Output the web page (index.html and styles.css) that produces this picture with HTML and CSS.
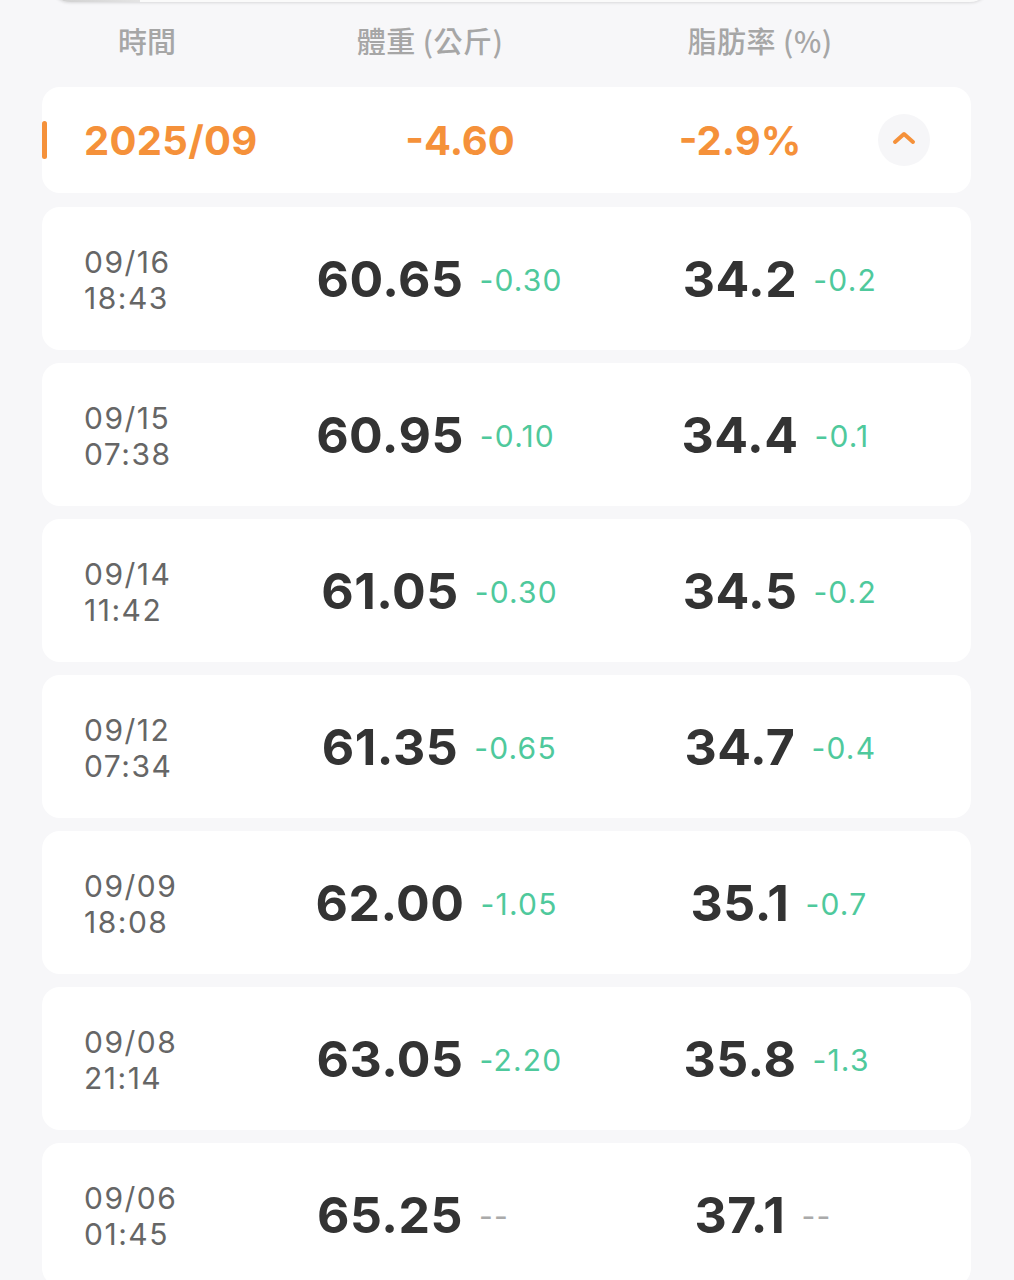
FILE: index.html
```html
<!DOCTYPE html>
<html lang="zh-Hant">
<head>
<meta charset="utf-8">
<title>體重紀錄</title>
<link rel="stylesheet" href="styles.css">
</head>
<body>
<div class="top-card"><div class="top-bar"></div></div>
<div class="head">
  <div class="h-time">時間</div>
  <div class="h-weight">體重 (公斤)</div>
  <div class="h-fat">脂肪率 (%)</div>
</div>
<div class="list">
  <div class="month">
    <div class="m-mark"></div>
    <div class="m-date">2025/09</div>
    <div class="m-weight">-4.60</div>
    <div class="m-fat">-2.9%</div>
    <div class="m-btn"><svg width="24" height="14" viewBox="0 0 24 14"><path d="M3 11 L12 3 L21 11" fill="none" stroke="#f5913a" stroke-width="4" stroke-linecap="round" stroke-linejoin="round"/></svg></div>
  </div>

  <div class="row">
    <div class="date">09/16<br>18:43</div>
    <div class="val"><span></span><span class="num">60.65</span><span class="delta">-0.30</span></div>
    <div class="val fat"><span></span><span class="num">34.2</span><span class="delta">-0.2</span></div>
  </div>
  <div class="row">
    <div class="date">09/15<br>07:38</div>
    <div class="val"><span></span><span class="num">60.95</span><span class="delta">-0.10</span></div>
    <div class="val fat"><span></span><span class="num">34.4</span><span class="delta">-0.1</span></div>
  </div>
  <div class="row">
    <div class="date">09/14<br>11:42</div>
    <div class="val"><span></span><span class="num">61.05</span><span class="delta">-0.30</span></div>
    <div class="val fat"><span></span><span class="num">34.5</span><span class="delta">-0.2</span></div>
  </div>
  <div class="row">
    <div class="date">09/12<br>07:34</div>
    <div class="val"><span></span><span class="num">61.35</span><span class="delta">-0.65</span></div>
    <div class="val fat"><span></span><span class="num">34.7</span><span class="delta">-0.4</span></div>
  </div>
  <div class="row">
    <div class="date">09/09<br>18:08</div>
    <div class="val"><span></span><span class="num">62.00</span><span class="delta">-1.05</span></div>
    <div class="val fat"><span></span><span class="num">35.1</span><span class="delta">-0.7</span></div>
  </div>
  <div class="row">
    <div class="date">09/08<br>21:14</div>
    <div class="val"><span></span><span class="num">63.05</span><span class="delta">-2.20</span></div>
    <div class="val fat"><span></span><span class="num">35.8</span><span class="delta">-1.3</span></div>
  </div>
  <div class="row">
    <div class="date">09/06<br>01:45</div>
    <div class="val"><span></span><span class="num">65.25</span><span class="delta none">--</span></div>
    <div class="val fat"><span></span><span class="num">37.1</span><span class="delta none">--</span></div>
  </div>
</div>
</body>
</html>
```

FILE: styles.css
```css
* { box-sizing: border-box; }
html, body { margin: 0; padding: 0; }
body {
  background: #f7f7f9;
  font-family: Inter, "Noto Sans CJK TC", "Noto Sans", sans-serif;
  width: 1014px;
  height: 1280px;
  overflow: hidden;
}
.top-card {
  margin: -20px 24px 0 50px;
  height: 22px;
  background: #fafafa;
  border-radius: 0 0 20px 20px;
  box-shadow: 0 1px 3px rgba(0,0,0,0.12);
  position: relative;
  overflow: hidden;
}
.top-bar {
  position: absolute;
  left: 0; bottom: 0;
  width: 90px; height: 3px;
  background: linear-gradient(90deg, #cfcfcf, #e4e4e4);
}
.head {
  display: grid;
  grid-template-columns: 294px 272px 388px;
  height: 85px;
  padding-bottom: 9px;
  align-items: center;
  font-size: 29px;
  font-weight: 500;
  color: #a6a6a6;
  font-family: "Noto Sans CJK TC", sans-serif;
}
.head > div { text-align: center; }
.h-weight { letter-spacing: 0.5px; }
.h-fat { letter-spacing: 0.5px; }
.list {
  display: flex;
  flex-direction: column;
  gap: 13px;
  padding: 0 43px 0 42px;
}
.month {
  height: 106px;
  background: #fff;
  border-radius: 18px;
  display: grid;
  grid-template-columns: 42px 216px 320px 240px 1fr;
  align-items: center;
  margin-bottom: 1px;
  color: #f5913a;
  font-weight: 700;
  font-size: 40px;
}
.m-mark {
  width: 5px;
  height: 38px;
  background: #f5913a;
  border-radius: 3px;
}
.m-date { letter-spacing: 0.3px; }
.m-weight { text-align: center; }
.m-fat { text-align: center; }
.m-btn {
  justify-self: end;
  margin-right: 41px;
  width: 52px;
  height: 52px;
  border-radius: 50%;
  background: #f6f6f8;
  display: flex;
  align-items: center;
  justify-content: center;
}
.m-btn svg { margin-top: -4px; }
.row {
  height: 143px;
  background: #fff;
  border-radius: 18px;
  display: grid;
  grid-template-columns: 218px 260px 80px 280px;
  align-items: center;
}
.date {
  padding-left: 42px;
  font-size: 30px;
  line-height: 36px;
  color: #666;
  letter-spacing: 1.5px;
  padding-top: 2px;
}
.val {
  display: grid;
  grid-template-columns: minmax(0,1fr) auto minmax(0,1fr);
  align-items: center;
  white-space: nowrap;
}
.val.fat { grid-column: 4; }
.num {
  font-size: 50px;
  font-weight: 700;
  color: #333;
  letter-spacing: 0.5px;
}
.delta {
  margin-left: 16px;
  font-size: 30px;
  color: #4fc99c;
  letter-spacing: 1.2px;
  padding-top: 2px;
}
.delta.none { color: #aaa; }
```
